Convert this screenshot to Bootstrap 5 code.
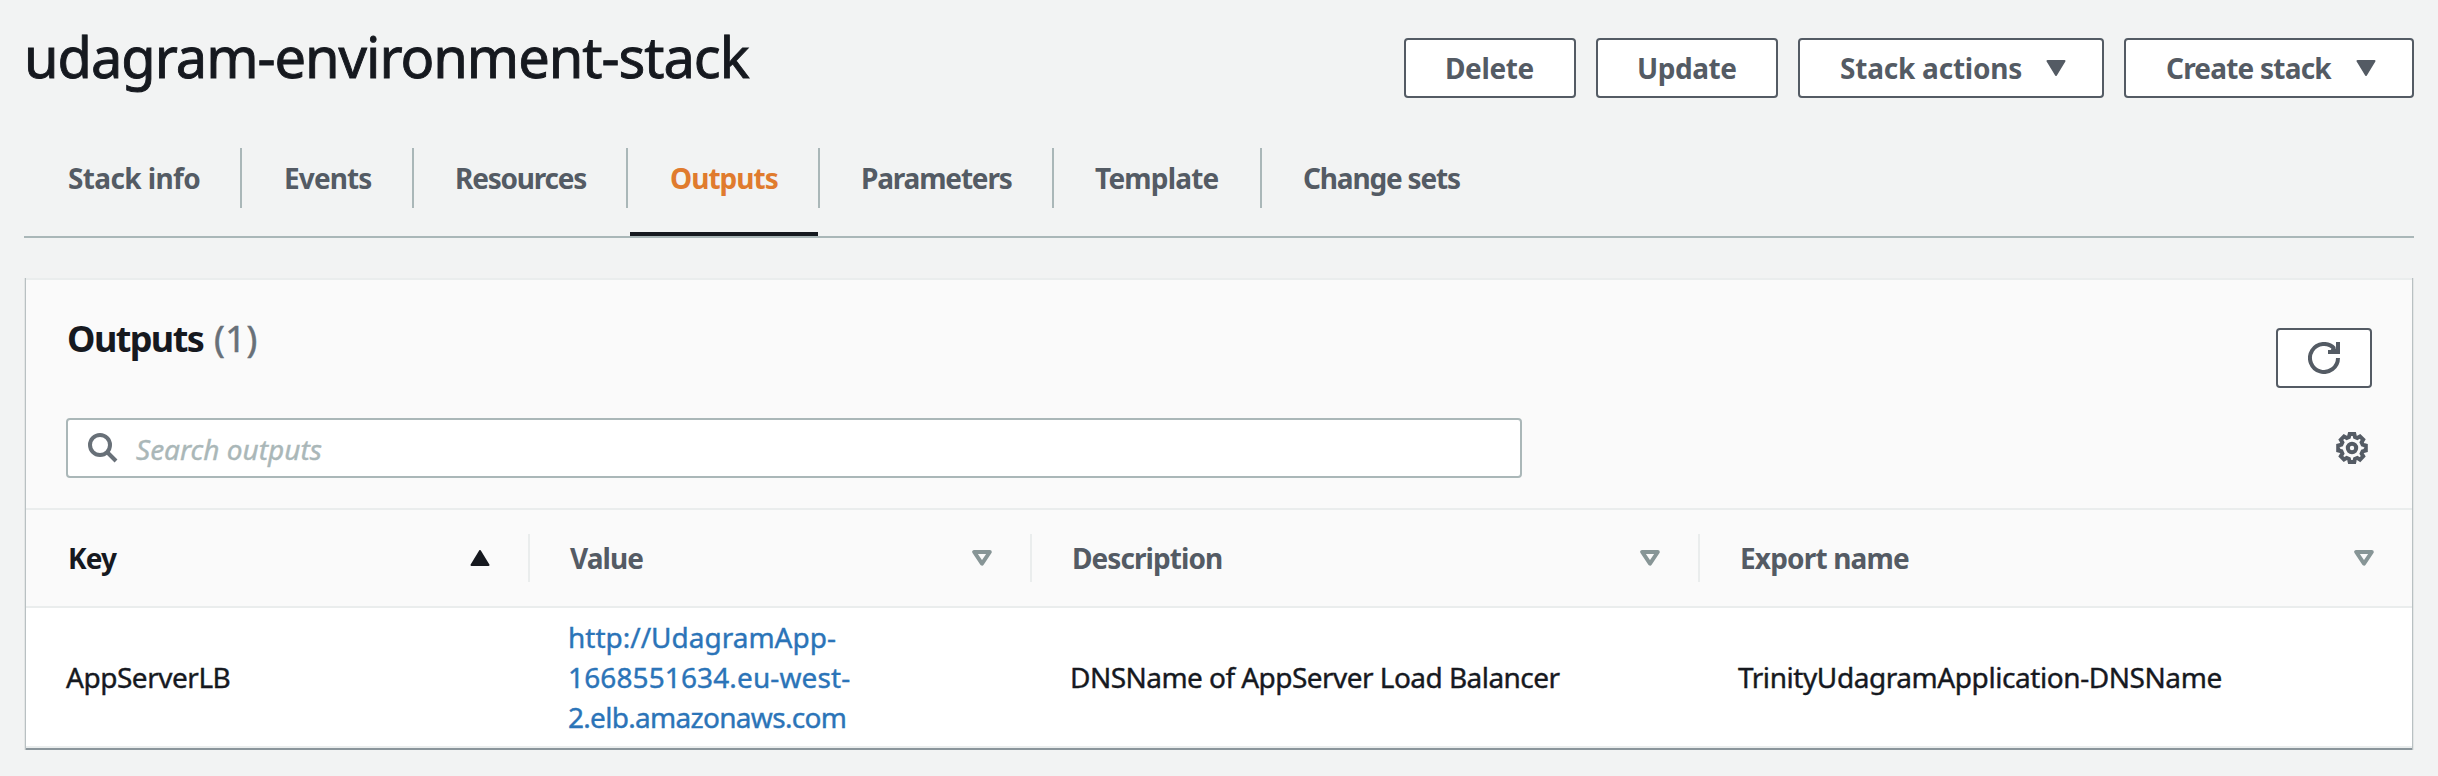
<!DOCTYPE html>
<html lang="en">
<head>
<meta charset="utf-8">
<meta name="viewport" content="width=device-width, initial-scale=1">
<title>udagram-environment-stack</title>
<link href="https://cdn.jsdelivr.net/npm/bootstrap@5.3.0/dist/css/bootstrap.min.css" rel="stylesheet">
<style>
  body { background: #f2f3f3; color: #16191f; font: 28px/40px "Noto Sans", "Open Sans", sans-serif; overflow: hidden; white-space: nowrap; }
  .page-wrap { padding: 0 24px; }
  .title-bar { height: 148px; padding-top: 38px; }
  h1 { font-size: 56px; line-height: 72px; font-weight: 400; letter-spacing: -1.03px; margin: -18px 0 0 0; -webkit-text-stroke: .9px #16191f; }
  .actions { gap: 20px; }
  .btn-aws { height: 60px; padding: 0 0 1px 40px; border: 2px solid #545b64; border-radius: 4px; background: #fff; color: #545b64; font-size: 28px; line-height: 54px; font-weight: 700; text-align: left; }
  .btn-delete { width: 172px; letter-spacing: -.38px; padding-left: 39px; }
  .btn-update { width: 182px; letter-spacing: -.46px; padding-left: 39px; }
  .btn-actions { width: 306px; letter-spacing: -.22px; }
  .btn-create { width: 290px; letter-spacing: -.79px; }
  .btn-aws .caret { margin-left: auto; margin-right: 36px; }
  .btn-refresh { width: 96px; padding: 0; }

  .stack-tabs { height: 90px; border-bottom: 2px solid #aab7b8; flex-wrap: nowrap; }
  .stack-tabs .nav-link { height: 60px; padding: 0 0 0 41px; border-right: 2px solid #aab7b8; color: #545b64; font-weight: 700; line-height: 60px; }
  .stack-tabs .t-info { width: 218px; padding-left: 44px; letter-spacing: -.62px; }
  .stack-tabs .t-events { width: 172px; padding-left: 42px; letter-spacing: -.89px; }
  .stack-tabs .t-resources { width: 214px; letter-spacing: -1.22px; }
  .stack-tabs .t-outputs { width: 192px; padding-left: 42px; letter-spacing: -.97px; }
  .stack-tabs .t-parameters { width: 234px; letter-spacing: -1.17px; }
  .stack-tabs .t-template { width: 208px; letter-spacing: -.81px; }
  .stack-tabs .t-changes { border: 0; letter-spacing: -1.18px; }
  .stack-tabs .nav-link.active { color: #e07b2e; position: relative; }
  .stack-tabs .nav-link.active::after { content: ""; position: absolute; left: 2px; right: 0; bottom: -28px; height: 4px; background: #16191f; }

  .panel { margin: 40px 2px 0; background: #fff; border: 0; border-top: 2px solid #eaeded; border-bottom: 2px solid #8a959b; border-radius: 0; box-shadow: -1px 0 0 #b9c0c2, 1px 0 0 #b9c0c2, 0 1px 0 #c5cbcd, -2px 0 0 #e3e6e6, 2px 0 0 #e3e6e6, 0 2px 0 #e8eaea; }
  .panel-top { height: 230px; padding: 0 40px; background: #fafafa; border-bottom: 2px solid #eaeded; }
  .panel-title { height: 138px; padding-top: 48px; }
  h2 { font-size: 36px; line-height: 48px; font-weight: 700; letter-spacing: -1.6px; margin: -13px 0 0 1px; }
  h2 span { font-weight: 400; letter-spacing: .6px; color: #687078; margin-left: 3px; -webkit-text-stroke: .5px #687078; }
  .search-box { width: 1456px; height: 60px; border: 2px solid #aab7b8; border-radius: 4px; background: #fff; color: #aab7b8; padding-left: 20px; line-height: 58px; font-style: italic; }
  .search-box svg { margin-right: 18px; }
  .search-box span { padding-top: 2px; -webkit-text-stroke: .4px #aab7b8; }
  .gear { margin: 14px 4px 0 0; }

  .outputs { table-layout: fixed; width: 100%; border-collapse: separate; border-spacing: 0; }
  .outputs th { height: 98px; padding: 0; background: #fafafa; border-bottom: 2px solid #eaeded; color: #545b64; font-weight: 700; }
  .outputs th.sorted { color: #16191f; }
  .head-cell { height: 48px; line-height: 44px; padding: 0 38px 0 40px; border-right: 2px solid #eaeded; }
  .head-cell span { padding-bottom: 1px; }
  th:last-child .head-cell { border: 0; }
  .outputs td { height: 140px; padding: 0 0 0 38px; border-bottom: 2px solid #eaeded; vertical-align: middle; -webkit-text-stroke: .4px currentColor; }
  .outputs td:first-child { padding-left: 40px; }
  .outputs a { color: #2b74b8; text-decoration: none; }
  .c-key { width: 504px; } .c-value { width: 502px; } .c-desc { width: 668px; }
  .ls-key { letter-spacing: -.87px; margin-left: 2px; } .ls-value { letter-spacing: -.91px; }
  .ls-desc { letter-spacing: -.93px; } .ls-export { letter-spacing: -.83px; }
  .ls-app { letter-spacing: -.47px; } .ls-u2 { letter-spacing: .12px; } .ls-u3 { letter-spacing: -.7px; }
  .ls-dns { letter-spacing: -.54px; } .ls-trinity { letter-spacing: -.43px; }
</style>
</head>
<body>
<svg class="d-none">
  <symbol id="sort" viewBox="0 0 20 16"><path d="M2.2 2h15.6L10 13.6z" fill="none" stroke="#879596" stroke-width="4" stroke-linejoin="round"/></symbol>
  <symbol id="caret" viewBox="0 0 20 16"><path d="M1.5 1h17L10 15z" fill="currentColor" stroke="currentColor" stroke-width="2" stroke-linejoin="round"/></symbol>
</svg>
<main class="page-wrap">
  <header class="title-bar d-flex justify-content-between align-items-start">
    <h1>udagram-environment-stack</h1>
    <div class="actions d-flex">
      <button class="btn btn-aws btn-delete">Delete</button>
      <button class="btn btn-aws btn-update">Update</button>
      <button class="btn btn-aws btn-actions d-flex align-items-center">Stack actions<svg class="caret" width="20" height="16"><use href="#caret"/></svg></button>
      <button class="btn btn-aws btn-create d-flex align-items-center">Create stack<svg class="caret" width="20" height="16"><use href="#caret"/></svg></button>
    </div>
  </header>
  <nav class="nav stack-tabs">
    <a class="nav-link t-info" href="#">Stack info</a>
    <a class="nav-link t-events" href="#">Events</a>
    <a class="nav-link t-resources" href="#">Resources</a>
    <a class="nav-link t-outputs active" href="#">Outputs</a>
    <a class="nav-link t-parameters" href="#">Parameters</a>
    <a class="nav-link t-template" href="#">Template</a>
    <a class="nav-link t-changes" href="#">Change sets</a>
  </nav>
  <section class="card panel">
    <div class="panel-top">
      <div class="panel-title d-flex justify-content-between">
        <h2>Outputs <span>(1)</span></h2>
        <button class="btn btn-aws btn-refresh d-flex align-items-center justify-content-center" aria-label="Refresh">
          <svg width="32" height="32" viewBox="0 0 32 32" fill="none" stroke="#545b64" stroke-width="4"><path d="M30 16a14 14 0 1 1-3.6-9.4"/><path d="M30 0v10H20M24 6l5 4" /></svg>
        </button>
      </div>
      <div class="d-flex justify-content-between align-items-start">
        <div class="search-box d-flex align-items-center">
          <svg width="30" height="30" viewBox="0 0 30 30" fill="none" stroke="#687078" stroke-width="4"><circle cx="12" cy="12" r="10"/><path d="M19 19l9 9"/></svg>
          <span>Search outputs</span>
        </div>
        <svg class="gear" width="32" height="32" viewBox="0 0 32 32" fill="none" stroke="#545b64"><circle cx="16" cy="16" r="4.2" stroke-width="4"/><path stroke-width="4" d="M13.7 2h4.6l.7 3 2.3 1 2.7-1.6 3.2 3.2-1.6 2.7 1 2.3 3.2.9v4.9l-3.2.9-1 2.3 1.6 2.7-3.2 3.3-2.7-1.7-2.3 1-.7 3.1h-4.6l-.8-3.1-2.2-1L8 27.500l-3.200-3.200 1.600-2.700-1-2.300-3.200-.8v-4.900l3.200-.9 1-2.300-1.600-2.700L8 4.400 10.700 6l2.200-1z"/></svg>
      </div>
    </div>
    <table class="outputs">
      <colgroup><col class="c-key"><col class="c-value"><col class="c-desc"><col></colgroup>
      <thead><tr>
        <th class="sorted"><div class="head-cell d-flex align-items-center justify-content-between"><span class="ls-key">Key</span><svg width="20" height="16"><use href="#caret" transform="rotate(180 10 8)"/></svg></div></th>
        <th><div class="head-cell d-flex align-items-center justify-content-between"><span class="ls-value">Value</span><svg width="20" height="16"><use href="#sort"/></svg></div></th>
        <th><div class="head-cell d-flex align-items-center justify-content-between"><span class="ls-desc">Description</span><svg width="20" height="16"><use href="#sort"/></svg></div></th>
        <th><div class="head-cell d-flex align-items-center justify-content-between"><span class="ls-export">Export name</span><svg width="20" height="16"><use href="#sort"/></svg></div></th>
      </tr></thead>
      <tbody><tr>
        <td class="ls-app">AppServerLB</td>
        <td><a href="#">http://UdagramApp-<br><span class="ls-u2">1668551634.eu-west-</span><br><span class="ls-u3">2.elb.amazonaws.com</span></a></td>
        <td class="ls-dns">DNSName of AppServer Load Balancer</td>
        <td class="ls-trinity">TrinityUdagramApplication-DNSName</td>
      </tr></tbody>
    </table>
  </section>
</main>
<script src="https://cdn.jsdelivr.net/npm/bootstrap@5.3.0/dist/js/bootstrap.bundle.min.js"></script>
</body>
</html>
